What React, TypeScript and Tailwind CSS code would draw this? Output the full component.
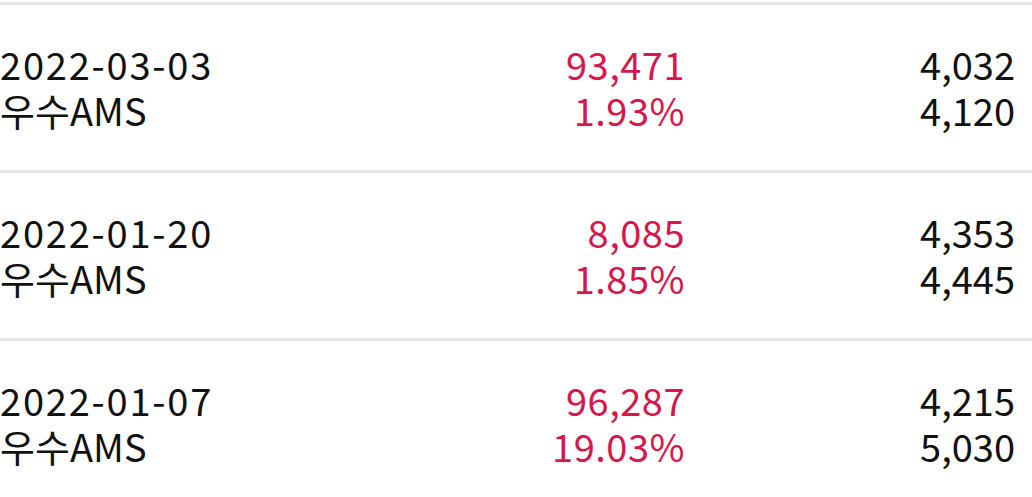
const rows = [
  { date: "2022-03-03", name: "우수AMS", amount: "93,471", rate: "1.93%", a: "4,032", b: "4,120" },
  { date: "2022-01-20", name: "우수AMS", amount: "8,085", rate: "1.85%", a: "4,353", b: "4,445" },
  { date: "2022-01-07", name: "우수AMS", amount: "96,287", rate: "19.03%", a: "4,215", b: "5,030" },
];

export default function App() {
  return (
    <div
      className="h-[497px] w-[1032px] overflow-hidden bg-white"
      style={{ fontFamily: '"Noto Sans CJK KR", "Noto Sans", sans-serif' }}
    >
      <div className="h-[2px]" />
      {rows.map((row) => (
        <div key={row.date} className="flex h-[168px] border-t-[3px] border-[#e6e6e6] pr-[17px] pt-[36px] text-[38px] leading-[46px]">
          <div className="flex-1 text-[#111111]">
            <div className="tracking-[1.8px]">{row.date}</div>
            <div>{row.name}</div>
          </div>
          <div className="w-[300px] text-right text-[#d4174c] tracking-[0.5px]">
            <div>{row.amount}</div>
            <div>{row.rate}</div>
          </div>
          <div className="w-[330px] text-right text-[#111111]">
            <div>{row.a}</div>
            <div>{row.b}</div>
          </div>
        </div>
      ))}
    </div>
  );
}
